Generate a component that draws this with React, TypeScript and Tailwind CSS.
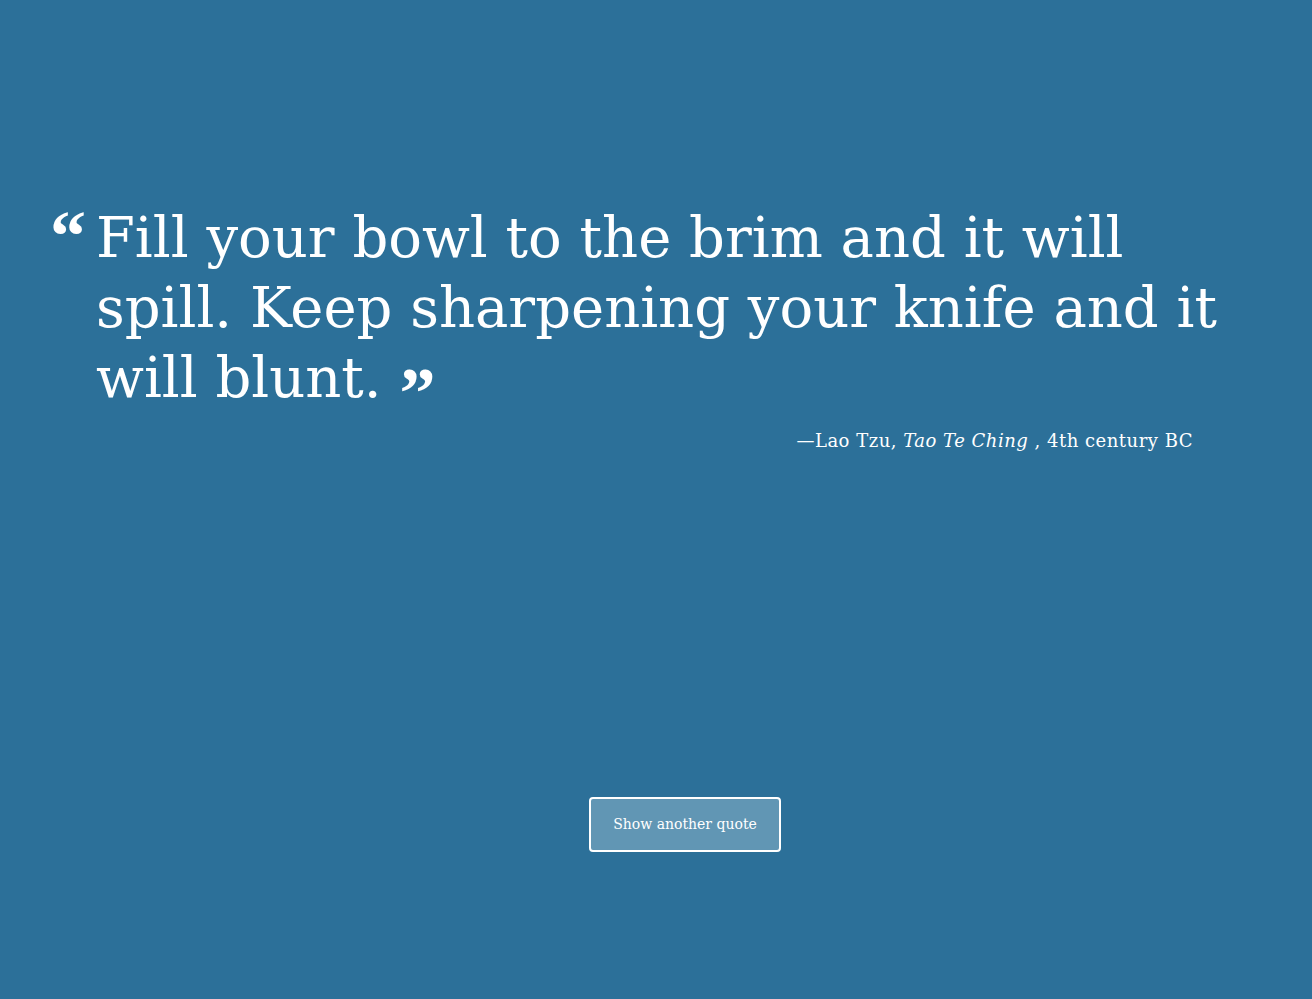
import React from "react";

export default function App() {
  return (
    <div className="min-h-screen w-full bg-[#2c7099] text-white" style={{ fontFamily: '"DejaVu Serif", "Liberation Serif", serif' }}>
      <div className="flex flex-col items-stretch pt-[203px]">
        <div className="relative pl-[96px] pr-[60px]">
          <blockquote className="relative text-[56px] leading-[70px] whitespace-nowrap">
            <span
              className="absolute left-[-46px] top-[-3px] font-bold text-[72px] leading-[72px]"
              style={{ fontFamily: '"Liberation Serif", serif' }}
            >
              “
            </span>
            Fill your bowl to the brim and it will
            <br />
            spill. Keep sharpening your knife and it
            <br />
            will blunt.{" "}
            <span
              className="relative top-[20px] font-bold text-[72px] leading-[0]"
              style={{ fontFamily: '"Liberation Serif", serif' }}
            >
              ”
            </span>
          </blockquote>
        </div>
        <div className="flex justify-end pr-[119px] mt-[14px]">
          <p className="text-[18px] tracking-[0.5px]">
            —Lao Tzu, <em>Tao Te Ching</em> , 4th century BC
          </p>
        </div>
        <div className="flex justify-center mt-[343px] pl-[58px]">
          <button className="w-[192px] h-[55px] rounded-[4px] border-2 border-white bg-[#6196b4] text-[14px] text-white">
            Show another quote
          </button>
        </div>
      </div>
    </div>
  );
}
